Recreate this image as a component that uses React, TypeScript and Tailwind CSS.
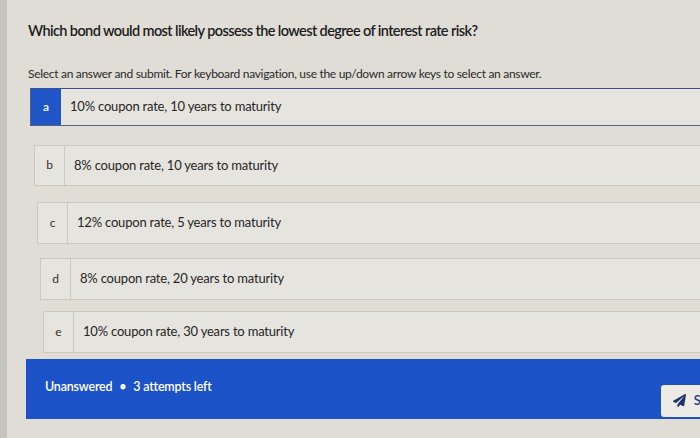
import { FaPaperPlane } from 'react-icons/fa';

type Choice = { key: string; text: string; indent: string; height: string; gap: string };

const CHOICES: Choice[] = [
  { key: 'a', text: '10% coupon rate, 10 years to maturity', indent: 'ml-[23px]', height: 'h-[38px]', gap: 'mt-0' },
  { key: 'b', text: '8% coupon rate, 10 years to maturity', indent: 'ml-[27px]', height: 'h-[41px]', gap: 'mt-[19px]' },
  { key: 'c', text: '12% coupon rate, 5 years to maturity', indent: 'ml-[30px]', height: 'h-[42px]', gap: 'mt-[16px]' },
  { key: 'd', text: '8% coupon rate, 20 years to maturity', indent: 'ml-[33px]', height: 'h-[42px]', gap: 'mt-[14px]' },
  { key: 'e', text: '10% coupon rate, 30 years to maturity', indent: 'ml-[36px]', height: 'h-[42px]', gap: 'mt-[11px]' },
];

// selected answer = first one (blue label cell)
function ChoiceRow({ choice, selected }: { choice: Choice; selected: boolean }) {
  return (
    <div
      className={`flex ${choice.height} ${choice.indent} ${choice.gap} border ${
        selected ? 'border-[#56607a] border-t-[#3c4f86]' : 'border-[#cbc8c0]'
      } bg-[#e6e4de]`}
    >
      <div
        className={`flex w-[30px] shrink-0 items-center justify-center text-[12px] ${
          selected ? 'bg-[#1f55c6] font-semibold text-white' : 'border-r border-[#cbc8c0] text-[#333]'
        }`}
      >
        {choice.key}
      </div>
      <div className="flex items-center pl-[9px] text-[13px] tracking-[-0.2px] text-[#262626]">{choice.text}</div>
    </div>
  );
}

export default function App() {
  return (
    <div
      className="h-[438px] w-[700px] overflow-hidden border-l-[7px] border-[#c6c4be] bg-[#e0ddd6]"
      style={{ fontFamily: 'Lato, "Open Sans", sans-serif' }}
    >
      <div className="pt-[20px] pl-[21px] text-[14.5px] font-semibold tracking-[-0.6px] text-[#1c1c1c]">
        Which bond would most likely possess the lowest degree of interest rate risk?
      </div>
      <div className="mt-[23px] pl-[21px] text-[12px] tracking-[-0.3px] text-[#2a2a2a]">
        Select an answer and submit. For keyboard navigation, use the up/down arrow keys to select an answer.
      </div>

      <div className="mt-[5px] -mr-[2px] flex flex-col">
        {CHOICES.map((c, i) => (
          <ChoiceRow key={c.key} choice={c} selected={i === 0} />
        ))}
      </div>

      <div className="mt-[6px] ml-[19px] flex h-[60px] bg-[#1c52c7] pl-[19px]">
        <span className="self-center pb-[2px] text-[12.5px] font-semibold tracking-[-0.2px] text-white">
          Unanswered <span className="mx-[4px]">•</span> 3 attempts left
        </span>
        <button className="ml-auto -mr-[46px] mb-[2px] flex h-[32px] items-center gap-[8px] self-end rounded-[3px] bg-[#ecebe6] px-[12px] text-[13px] font-semibold text-[#1f3f8a]">
          <FaPaperPlane className="h-[13px] w-[13px] text-[#1e3270]" />
          Submit
        </button>
      </div>
    </div>
  );
}
